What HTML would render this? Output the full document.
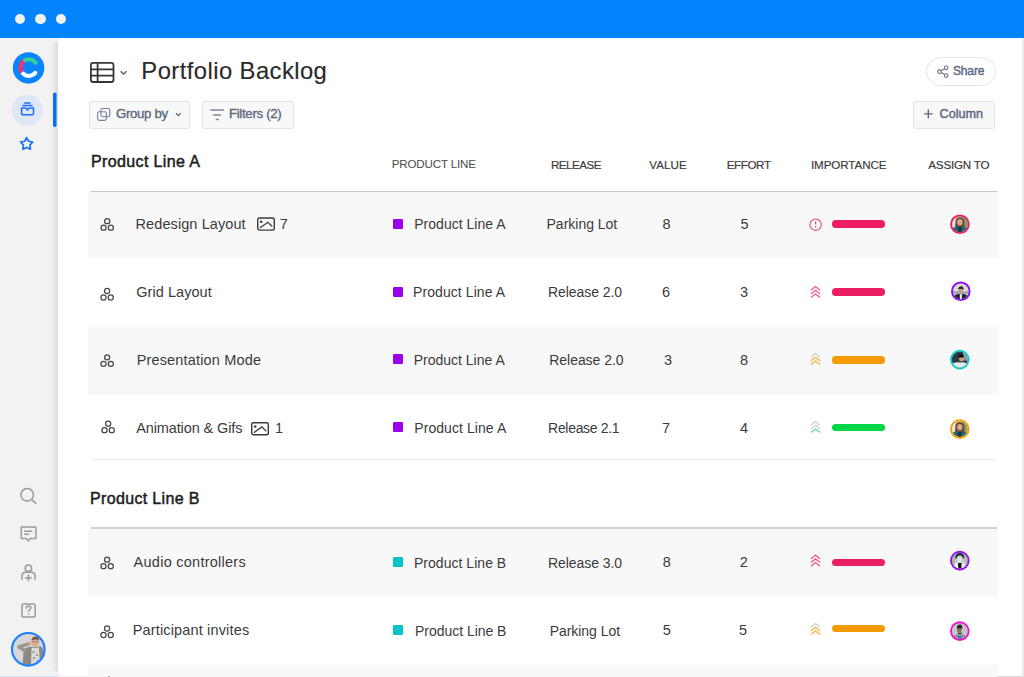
<!DOCTYPE html>
<html><head><meta charset="utf-8">
<style>
*{margin:0;padding:0;box-sizing:border-box}
html,body{width:1024px;height:677px;overflow:hidden;background:#f2f2f2;font-family:"Liberation Sans",sans-serif;color:#333}
.a{position:absolute}
.tx{position:absolute;line-height:1;white-space:nowrap}
svg{position:absolute;overflow:visible}
#bar{left:0;top:0;width:1024px;height:38px;background:#0384ff}
.dot{width:10.5px;height:10.5px;border-radius:50%;background:#f1f1f1;top:13.75px}
#panel{left:57.6px;top:38px;width:965px;height:638px;background:#fff;border-top-left-radius:5px;border-bottom-left-radius:5px;}
#redge{left:1022.4px;top:38px;width:1.6px;height:639px;background:#e9e9e9}
.btn{position:absolute;border:1px solid #e3e3e3;background:#f8f8f8;border-radius:3px}
.rowg{position:absolute;left:88px;width:909.5px;background:#f8f8f8}
.sq{position:absolute;left:392.7px;width:10.4px;height:10.2px;border-radius:1.2px}
.bar{position:absolute;left:832px;width:52.5px;height:7.7px;border-radius:3.85px}
.av{position:absolute;width:19.5px;height:19.5px;border-radius:50%;border:2px solid #e91e63}
</style></head><body>
<div id="bar" class="a"></div>
<div class="a dot" style="left:14.8px"></div>
<div class="a dot" style="left:35px"></div>
<div class="a dot" style="left:55.6px"></div>
<div class="a" style="left:50px;top:42px;width:8px;height:629px;background:linear-gradient(to right,rgba(0,0,0,0) 0,rgba(0,0,0,.02) 35%,rgba(0,0,0,.06) 70%,rgba(0,0,0,.1) 100%)"></div>
<div id="panel" class="a"></div>
<div id="redge" class="a"></div>

<!-- sidebar -->
<svg style="left:0;top:0" width="60" height="677" viewBox="0 0 60 677">
  <circle cx="28.55" cy="67.95" r="15.75" fill="#0a84ff"/>
  <g fill="none" stroke-width="4" stroke-linecap="butt">
    <path d="M24.33,60.64 A8.3,8.3 0 0 0 22.09,72.42" stroke="#ff2d6d"/>
    <path d="M22.09,72.42 A8.3,8.3 0 0 0 35.3,72.82" stroke="#ffffff"/>
    <path d="M23.74,61.06 A8.3,8.3 0 0 1 35.52,62.66" stroke="#34d28f"/>
  </g>
  <circle cx="35.52" cy="62.66" r="2" fill="#34d28f"/>
  <circle cx="35.3" cy="72.82" r="2" fill="#ffffff"/>
  <circle cx="27.3" cy="110" r="15.5" fill="#dfe7f5"/>
  <rect x="53" y="92.6" width="3.5" height="34.4" rx="1.7" fill="#0a6cff"/>
  <g fill="none" stroke="#1a6dff" stroke-width="1.5" stroke-linecap="round" stroke-linejoin="round">
    <path d="M24.6,102.9 H30"/>
    <path d="M23,105.4 H32"/>
    <path d="M21.6,108 H25.8 L27.5,110 L29.2,108 H33.5 V113.6 Q33.5,114.8 32.3,114.8 H22.8 Q21.6,114.8 21.6,113.6 Z"/>
    <path d="M26.65,137.60 L28.65,141.25 L32.74,142.02 L29.88,145.05 L30.41,149.18 L26.65,147.40 L22.89,149.18 L23.42,145.05 L20.56,142.02 L24.65,141.25 Z" stroke-width="1.7"/>
  </g>
  <g fill="none" stroke="#9a9a9a" stroke-width="1.5" stroke-linecap="round" stroke-linejoin="round">
    <circle cx="27.2" cy="494.8" r="6.3"/>
    <path d="M31.9,499.5 L35.8,503.4"/>
    <path d="M22,526.9 H35.4 Q36,526.9 36,527.5 V538 Q36,538.6 35.4,538.6 H30.2 L28.4,540.9 L26.6,538.6 H22 Q21.3,538.6 21.3,538 V527.5 Q21.3,526.9 22,526.9 Z"/>
    <path d="M24.6,531.2 H31.8 M24.6,534.3 H28.6"/>
    <circle cx="28.4" cy="568.3" r="3.2"/>
    <path d="M22,579 V576.2 Q22,572.3 25.6,572.3 H31.2 Q35,572.3 35,576.2 V579"/>
    <path d="M28.4,574.9 V580.8 M25.5,577.9 H31.3"/>
    <rect x="22" y="603.9" width="13.2" height="13.2" rx="2"/>
    <path d="M26.3,608.3 Q26.3,606 28.6,606 Q30.9,606 30.9,608.1 Q30.9,609.6 28.6,610.6 V611.6"/>
  </g>
  <circle cx="28.6" cy="614.1" r="0.9" fill="#9a9a9a"/>
  <defs>
    <clipPath id="avc"><circle cx="28.3" cy="649.3" r="15.6"/></clipPath>
    <filter id="bl2" x="-20%" y="-20%" width="140%" height="140%"><feGaussianBlur stdDeviation="0.45"/></filter>
  </defs>
  <g clip-path="url(#avc)">
    <g filter="url(#bl2)">
    <rect x="10" y="631" width="37" height="37" fill="#d7d7d7"/>
    <path d="M22.5,667 L23.5,652 Q24.5,647.5 29,647 L41,646.5 Q45,648 45,667 Z" fill="#8d8a84"/>
    <path d="M31.5,648 L39,647.5 L40,667 L31,667 Z" fill="#dadada"/>
    <path d="M32.5,651 h2 v2 h-2 z M36,654 h2 v2 h-2 z M33,657 h2 v2 h-2 z M36.5,660 h2 v2 h-2 z M33.5,663 h2 v2 h-2 z" fill="#9a9a9a"/>
    <path d="M24.5,650.5 L18.8,646.8 L28.8,643.8" fill="none" stroke="#9b978f" stroke-width="3.4" stroke-linecap="round" stroke-linejoin="round"/>
    <circle cx="29.6" cy="643.4" r="1.9" fill="#d4a487"/>
    <ellipse cx="35.3" cy="642.3" rx="3.7" ry="4.3" fill="#d8ad93"/>
    <path d="M31.4,640.6 Q31.5,636.6 35.6,636.4 Q39.4,636.6 39.2,640.4 Q36.5,638.6 31.4,640.6 Z" fill="#7d5a43"/>
    <path d="M32.2,641.6 H38.6" stroke="#7a7070" stroke-width="0.6"/>
    </g>
  </g>
  <circle cx="28.3" cy="649.3" r="16.3" fill="none" stroke="#1a80ff" stroke-width="2.1"/>
  <rect x="0" y="676" width="57" height="1" fill="#cfe0f7"/>
</svg>

<!-- header -->
<svg style="left:0;top:0" width="1024" height="140" viewBox="0 0 1024 140">
  <g fill="none" stroke="#363636" stroke-width="1.8">
    <rect x="90.9" y="62.9" width="22.6" height="19.1" rx="2.3"/>
    <path d="M97.6,63 V82 M91,69.3 H113.5 M91,75.7 H113.5"/>
  </g>
  <path d="M120.6,71.2 L123.6,74.2 L126.6,71.2" fill="none" stroke="#555" stroke-width="1.3"/>
</svg>
<div class="btn" style="left:89px;top:101px;width:101px;height:28px"></div>
<div class="btn" style="left:202px;top:101px;width:92px;height:28px"></div>
<div class="btn" style="left:926px;top:57px;width:70px;height:29px;border-radius:15px;background:#fff"></div>
<div class="btn" style="left:913px;top:101px;width:82px;height:28px"></div>
<svg style="left:0;top:0" width="1024" height="140" viewBox="0 0 1024 140">
  <g fill="none" stroke="#76829a" stroke-width="1.1">
    <rect x="100.9" y="108.5" width="8.8" height="8.3" rx="1.8"/>
    <rect x="97.6" y="111.7" width="8.8" height="8.7" rx="1.8"/>
  </g>
  <path d="M176,113.2 L178.3,115.6 L180.6,113.2" fill="none" stroke="#5a677f" stroke-width="1.3"/>
  <g fill="none" stroke="#7d879b" stroke-width="1.5" stroke-linecap="round">
    <path d="M210.8,110.1 H223.3 M213.6,114.9 H220.6 M216.4,119.6 H218.2"/>
  </g>
  <g fill="none" stroke="#68748c" stroke-width="1.1">
    <circle cx="946.2" cy="67.8" r="1.8"/>
    <circle cx="939.5" cy="71.7" r="1.8"/>
    <circle cx="946.2" cy="75.6" r="1.8"/>
    <path d="M944.6,68.8 L941.1,70.8 M941.1,72.6 L944.6,74.6"/>
  </g>
  <path d="M928.3,109.5 V118.2 M924,113.85 H932.6" fill="none" stroke="#5a677f" stroke-width="1.4"/>
</svg>

<!-- table -->
<div class="rowg" style="top:192px;height:66px"></div>
<div class="rowg" style="top:326.5px;height:68.5px"></div>
<div class="rowg" style="top:528.8px;height:68px"></div>
<div class="rowg" style="top:664.6px;height:13px"></div>
<div class="a" style="left:91px;top:190.8px;width:906px;height:1.4px;background:#c9c9c9"></div>
<div class="a" style="left:91px;top:459px;width:904px;height:1px;background:#ebebeb"></div>
<div class="a" style="left:91px;top:527px;width:906px;height:1.8px;background:#d0d0d0"></div>
<div class="a" style="left:997px;top:676px;width:25px;height:1px;background:#dcdcdc"></div>

<svg style="left:0;top:0" width="1024" height="677" viewBox="0 0 1024 677">
  <defs>
    <g id="tri" fill="none" stroke="#474747" stroke-width="1.25">
      <circle cx="0" cy="-3.25" r="2.55"/>
      <circle cx="-3.65" cy="3.25" r="2.55"/>
      <circle cx="3.65" cy="3.25" r="2.55"/>
    </g>
    <g id="img" fill="none" stroke="#3a3a3a" stroke-width="1.4">
      <rect x="0.7" y="0.7" width="16.6" height="12.1" rx="1.8"/>
      <path d="M2.8,10.7 L10.8,4.9 L15.3,9.2" stroke-width="1.2"/>
      <circle cx="4.2" cy="4.5" r="1.3" fill="#3a3a3a" stroke="none"/>
    </g>
  </defs>
  <use href="#tri" x="107.2" y="224.4"/>
  <use href="#tri" x="107.1" y="294.3"/>
  <use href="#tri" x="107.15" y="360.6"/>
  <use href="#tri" x="108.15" y="426.9"/>
  <use href="#tri" x="107.1" y="562.9"/>
  <use href="#tri" x="107.1" y="631.8"/>
  <use href="#img" x="257" y="217.3"/>
  <use href="#img" x="251" y="422"/>
  <!-- importance icons -->
  <g fill="none" stroke="#e9457a" stroke-width="1.1">
    <circle cx="815.6" cy="224.7" r="5.7"/>
  </g>
  <path d="M815.6,221.5 V224.5 M815.6,226 V227.6" stroke="#e9457a" stroke-width="1.2"/>
  <g fill="none" stroke-width="1.3" stroke-linecap="butt" stroke-linejoin="miter">
    <path d="M810.9,290.20 L815.5,286.60 L820.1,290.20" stroke="#ee5a8a"/>
    <path d="M810.9,293.90 L815.5,290.30 L820.1,293.90" stroke="#ee5a8a"/>
    <path d="M810.9,297.60 L815.5,294.00 L820.1,297.60" stroke="#ee5a8a"/>
    <path d="M810.9,357.20 L815.5,353.60 L820.1,357.20" stroke="#cfcfcf"/>
    <path d="M810.9,360.90 L815.5,357.30 L820.1,360.90" stroke="#f7b23a"/>
    <path d="M810.9,364.60 L815.5,361.00 L820.1,364.60" stroke="#f7b23a"/>
    <path d="M810.9,425.20 L815.5,421.60 L820.1,425.20" stroke="#cfcfcf"/>
    <path d="M810.9,428.90 L815.5,425.30 L820.1,428.90" stroke="#cfcfcf"/>
    <path d="M810.9,432.60 L815.5,429.00 L820.1,432.60" stroke="#5de08a"/>
    <path d="M810.9,558.80 L815.5,555.20 L820.1,558.80" stroke="#ee5a8a"/>
    <path d="M810.9,562.50 L815.5,558.90 L820.1,562.50" stroke="#ee5a8a"/>
    <path d="M810.9,566.20 L815.5,562.60 L820.1,566.20" stroke="#ee5a8a"/>
    <path d="M810.9,627.20 L815.5,623.60 L820.1,627.20" stroke="#cfcfcf"/>
    <path d="M810.9,630.90 L815.5,627.30 L820.1,630.90" stroke="#f7b23a"/>
    <path d="M810.9,634.60 L815.5,631.00 L820.1,634.60" stroke="#f7b23a"/>
  </g>
</svg>
<div class="sq" style="top:218.6px;background:#9b00ee"></div>
<div class="sq" style="top:286.7px;background:#9b00ee"></div>
<div class="sq" style="top:353.8px;background:#9b00ee"></div>
<div class="sq" style="top:421.8px;background:#9b00ee"></div>
<div class="sq" style="top:556.7px;background:#05c5c8"></div>
<div class="sq" style="top:624.7px;background:#05c5c8"></div>
<div class="bar" style="top:220.4px;background:#e91e63"></div>
<div class="bar" style="top:288.4px;background:#e91e63"></div>
<div class="bar" style="top:356.4px;background:#f59b00"></div>
<div class="bar" style="top:423.7px;background:#00d647"></div>
<div class="bar" style="top:558.6px;background:#e91e63"></div>
<div class="bar" style="top:624.6px;background:#f59b00"></div>
<svg style="left:0;top:0" width="1024" height="677" viewBox="0 0 1024 677">
  <defs>
    <clipPath id="ac"><circle cx="0" cy="0" r="8"/></clipPath>
    <filter id="bl" x="-20%" y="-20%" width="140%" height="140%"><feGaussianBlur stdDeviation="0.35"/></filter>
    <g id="woman">
      <g clip-path="url(#ac)" filter="url(#bl)">
        <rect x="-9" y="-9" width="18" height="18" fill="#c9d2c4"/>
        <rect x="2" y="-9" width="8" height="18" fill="#7fa36a"/>
        <rect x="-9" y="-9" width="5" height="18" fill="#e4e4e4"/>
        <path d="M-4.5,-1 Q-5,-7 0,-7 Q5,-7 4.5,-1 L5,6 L-5,6 Z" fill="#6e4a36"/>
        <ellipse cx="0" cy="-2" rx="2.6" ry="3.2" fill="#d7a88e"/>
        <path d="M-9,9 L-8,4 Q-4,1.5 0,3 Q4,1.5 7,4 L9,9 Z" fill="#1f6a78"/>
        <path d="M-2,3 L2,3 L1.5,9 L-1.5,9 Z" fill="#233238"/>
      </g>
    </g>
  </defs>
  <g transform="translate(959.9,224.3)">
    <use href="#woman"/>
    <circle r="8.85" fill="none" stroke="#e91e63" stroke-width="1.9"/>
  </g>
  <g transform="translate(959.8,429.1)">
    <use href="#woman"/>
    <circle r="8.85" fill="none" stroke="#f5a000" stroke-width="1.9"/>
  </g>
  <g transform="translate(960.8,291.3)">
    <g clip-path="url(#ac)" filter="url(#bl)">
      <rect x="-9" y="-9" width="18" height="18" fill="#dadada"/>
      <rect x="-9" y="0" width="18" height="2.5" fill="#9aa6b4"/>
      <ellipse cx="0" cy="-0.5" rx="2.3" ry="3" fill="#c89a80"/>
      <path d="M-2.6,-2 Q-2.5,-5 0.5,-5 Q3,-5 2.8,-1.5 Q1,-3.5 -2.6,-2 Z" fill="#262626"/>
      <path d="M-7,9 L-6,4 Q-3,2 0,3 Q3,2 6,4 L7,9 Z" fill="#1c2630"/>
      <path d="M-1,3 L1.2,3 L1,9 L-1,9 Z" fill="#eeeeee"/>
    </g>
    <circle r="8.85" fill="none" stroke="#9010e8" stroke-width="1.9"/>
  </g>
  <g transform="translate(959.8,359.6)">
    <g clip-path="url(#ac)" filter="url(#bl)">
      <rect x="-9" y="-9" width="18" height="18" fill="#2b3a44"/>
      <rect x="3" y="-9" width="6" height="10" fill="#8d96a0"/>
      <ellipse cx="1.5" cy="-1" rx="2.3" ry="3" fill="#c89a80"/>
      <path d="M-2,-2 Q-1,-6 2,-5.5 Q4.5,-5 3.8,-2 Z" fill="#111"/>
      <path d="M-8,9 L-7,4 Q-3,2 1,3 Q4,2 7,4 L8,9 Z" fill="#e6e6e6"/>
    </g>
    <circle r="8.85" fill="none" stroke="#14c8c8" stroke-width="1.9"/>
  </g>
  <g transform="translate(959.8,560.6)">
    <g clip-path="url(#ac)" filter="url(#bl)">
      <rect x="-9" y="-9" width="18" height="18" fill="#c9c9c9"/>
      <rect x="-9" y="-9" width="4" height="18" fill="#a5b79a"/>
      <rect x="5" y="-9" width="4" height="18" fill="#b2c2a6"/>
      <path d="M-4.5,-2 Q-5,-7.5 0,-7.5 Q5,-7.5 4.5,-2 L3,-2 Q3,-5 0,-5 Q-3,-5 -3,-2 Z" fill="#22303a"/>
      <ellipse cx="0" cy="-1" rx="2.4" ry="3.1" fill="#e2e2e2"/>
      <path d="M-6,9 L-5,3 Q-3,1.5 -1.5,3 L1.5,3 Q3,1.5 5,3 L6,9 Z" fill="#f0f0f0"/>
      <path d="M-1.8,2.5 L1.8,2.5 L1.5,9 L-1.5,9 Z" fill="#151515"/>
    </g>
    <circle r="8.85" fill="none" stroke="#9010e8" stroke-width="1.9"/>
  </g>
  <g transform="translate(959.8,631.1)">
    <g clip-path="url(#ac)" filter="url(#bl)">
      <rect x="-9" y="-9" width="18" height="18" fill="#c4c7c8"/>
      <ellipse cx="-0.5" cy="-1.5" rx="2.4" ry="3" fill="#8c7466"/>
      <path d="M-3,-2.5 Q-3,-6.5 0,-6.5 Q3,-6.5 2.5,-2.5 Z" fill="#2a2a2a"/>
      <path d="M-2,1 Q0,3 2,1 L1.5,3 L-1.5,3 Z" fill="#222"/>
      <path d="M-7,9 L-6,5 Q-3,2.5 0,3.5 Q3,2.5 6,5 L7,9 Z" fill="#8b9196"/>
      <path d="M-1,4 L1,4 L3,9 L-3,9 Z" fill="#5a7f95"/>
    </g>
    <circle r="8.85" fill="none" stroke="#f010d0" stroke-width="1.9"/>
  </g>
</svg>

<div class="a" style="left:107.6px;top:675.8px;width:2.6px;height:1.2px;background:#8790a3;border-radius:1px 1px 0 0"></div>
<div id="title" class="tx" style="left:141.37px;top:58.95px;font-size:23.8px;font-weight:normal;color:#2a2a2a;letter-spacing:0.433px;-webkit-text-stroke:0.15px #2a2a2a">Portfolio Backlog</div>
<div id="grp" class="tx" style="left:116.00px;top:106.82px;font-size:13.2px;font-weight:normal;color:#5b6880;letter-spacing:-0.309px;-webkit-text-stroke:0.35px #5b6880">Group by</div>
<div id="flt" class="tx" style="left:228.88px;top:106.82px;font-size:13.2px;font-weight:normal;color:#5b6880;letter-spacing:-0.279px;-webkit-text-stroke:0.35px #5b6880">Filters (2)</div>
<div id="shr" class="tx" style="left:952.88px;top:65.04px;font-size:12px;font-weight:normal;color:#5b6880;letter-spacing:-0.113px;-webkit-text-stroke:0.4px #5b6880">Share</div>
<div id="col" class="tx" style="left:939.61px;top:107.53px;font-size:12.6px;font-weight:normal;color:#5b6880;letter-spacing:0.018px;-webkit-text-stroke:0.45px #5b6880">Column</div>
<div id="plA" class="tx" style="left:91.05px;top:154.45px;font-size:16px;font-weight:normal;color:#1e1e1e;letter-spacing:0.367px;-webkit-text-stroke:0.5px #1e1e1e">Product Line A</div>
<div id="plB" class="tx" style="left:90.10px;top:490.65px;font-size:16px;font-weight:normal;color:#1e1e1e;letter-spacing:0.332px;-webkit-text-stroke:0.5px #1e1e1e">Product Line B</div>
<div id="h1" class="tx" style="left:391.77px;top:157.98px;font-size:11.6px;font-weight:normal;color:#4a4a4a;letter-spacing:-0.180px">PRODUCT LINE</div>
<div id="h2" class="tx" style="left:550.88px;top:159.48px;font-size:11.6px;font-weight:normal;color:#3b3b3b;letter-spacing:-0.480px;-webkit-text-stroke:0.18px #3b3b3b">RELEASE</div>
<div id="h3" class="tx" style="left:649.22px;top:159.48px;font-size:11.6px;font-weight:normal;color:#3b3b3b;letter-spacing:0.113px;-webkit-text-stroke:0.18px #3b3b3b">VALUE</div>
<div id="h4" class="tx" style="left:726.71px;top:159.48px;font-size:11.6px;font-weight:normal;color:#3b3b3b;letter-spacing:-0.378px;-webkit-text-stroke:0.18px #3b3b3b">EFFORT</div>
<div id="h5" class="tx" style="left:810.88px;top:159.48px;font-size:11.6px;font-weight:normal;color:#3b3b3b;letter-spacing:-0.060px;-webkit-text-stroke:0.18px #3b3b3b">IMPORTANCE</div>
<div id="h6" class="tx" style="left:928.34px;top:159.48px;font-size:11.6px;font-weight:normal;color:#3b3b3b;letter-spacing:-0.202px;-webkit-text-stroke:0.18px #3b3b3b">ASSIGN TO</div>
<div id="r0n" class="tx" style="left:135.54px;top:216.52px;font-size:14.5px;font-weight:normal;color:#3b3b3b;letter-spacing:0.090px">Redesign Layout</div>
<div id="r0c" class="tx" style="left:279.83px;top:216.52px;font-size:14.5px;font-weight:normal;color:#3b3b3b;letter-spacing:0.000px">7</div>
<div id="r0p" class="tx" style="left:414.27px;top:216.95px;font-size:14px;font-weight:normal;color:#3b3b3b;letter-spacing:0.014px">Product Line A</div>
<div id="r0r" class="tx" style="left:546.54px;top:216.95px;font-size:14px;font-weight:normal;color:#3b3b3b;letter-spacing:-0.009px">Parking Lot</div>
<div id="r0v" class="tx" style="left:662.44px;top:216.52px;font-size:14.5px;font-weight:normal;color:#3b3b3b;letter-spacing:0.000px">8</div>
<div id="r0e" class="tx" style="left:740.44px;top:216.52px;font-size:14.5px;font-weight:normal;color:#3b3b3b;letter-spacing:0.000px">5</div>
<div id="r1n" class="tx" style="left:136.22px;top:284.72px;font-size:14.5px;font-weight:normal;color:#3b3b3b;letter-spacing:0.054px">Grid Layout</div>
<div id="r1p" class="tx" style="left:413.10px;top:285.15px;font-size:14px;font-weight:normal;color:#3b3b3b;letter-spacing:0.069px">Product Line A</div>
<div id="r1r" class="tx" style="left:548.08px;top:285.15px;font-size:14px;font-weight:normal;color:#3b3b3b;letter-spacing:-0.076px">Release 2.0</div>
<div id="r1v" class="tx" style="left:662.00px;top:284.72px;font-size:14.5px;font-weight:normal;color:#3b3b3b;letter-spacing:0.000px">6</div>
<div id="r1e" class="tx" style="left:740.00px;top:284.72px;font-size:14.5px;font-weight:normal;color:#3b3b3b;letter-spacing:0.000px">3</div>
<div id="r2n" class="tx" style="left:136.66px;top:352.62px;font-size:14.5px;font-weight:normal;color:#3b3b3b;letter-spacing:0.163px">Presentation Mode</div>
<div id="r2p" class="tx" style="left:413.66px;top:353.05px;font-size:14px;font-weight:normal;color:#3b3b3b;letter-spacing:0.000px">Product Line A</div>
<div id="r2r" class="tx" style="left:549.27px;top:353.05px;font-size:14px;font-weight:normal;color:#3b3b3b;letter-spacing:-0.045px">Release 2.0</div>
<div id="r2v" class="tx" style="left:664.00px;top:352.62px;font-size:14.5px;font-weight:normal;color:#3b3b3b;letter-spacing:0.000px">3</div>
<div id="r2e" class="tx" style="left:740.00px;top:352.62px;font-size:14.5px;font-weight:normal;color:#3b3b3b;letter-spacing:0.000px">8</div>
<div id="r3n" class="tx" style="left:136.17px;top:420.92px;font-size:14.5px;font-weight:normal;color:#3b3b3b;letter-spacing:-0.114px">Animation &amp; Gifs</div>
<div id="r3c" class="tx" style="left:275.05px;top:420.92px;font-size:14.5px;font-weight:normal;color:#3b3b3b;letter-spacing:0.000px">1</div>
<div id="r3p" class="tx" style="left:414.27px;top:421.35px;font-size:14px;font-weight:normal;color:#3b3b3b;letter-spacing:0.069px">Product Line A</div>
<div id="r3r" class="tx" style="left:548.10px;top:421.35px;font-size:14px;font-weight:normal;color:#3b3b3b;letter-spacing:-0.315px">Release 2.1</div>
<div id="r3v" class="tx" style="left:662.00px;top:420.92px;font-size:14.5px;font-weight:normal;color:#3b3b3b;letter-spacing:0.000px">7</div>
<div id="r3e" class="tx" style="left:740.00px;top:420.92px;font-size:14.5px;font-weight:normal;color:#3b3b3b;letter-spacing:0.000px">4</div>
<div id="r4n" class="tx" style="left:133.61px;top:555.32px;font-size:14.5px;font-weight:normal;color:#3b3b3b;letter-spacing:0.253px">Audio controllers</div>
<div id="r4p" class="tx" style="left:413.93px;top:555.75px;font-size:14px;font-weight:normal;color:#3b3b3b;letter-spacing:0.035px">Product Line B</div>
<div id="r4r" class="tx" style="left:548.08px;top:555.75px;font-size:14px;font-weight:normal;color:#3b3b3b;letter-spacing:-0.076px">Release 3.0</div>
<div id="r4v" class="tx" style="left:662.66px;top:555.32px;font-size:14.5px;font-weight:normal;color:#3b3b3b;letter-spacing:0.000px">8</div>
<div id="r4e" class="tx" style="left:739.66px;top:555.32px;font-size:14.5px;font-weight:normal;color:#3b3b3b;letter-spacing:0.000px">2</div>
<div id="r5n" class="tx" style="left:132.71px;top:623.12px;font-size:14.5px;font-weight:normal;color:#3b3b3b;letter-spacing:0.155px">Participant invites</div>
<div id="r5p" class="tx" style="left:415.05px;top:623.55px;font-size:14px;font-weight:normal;color:#3b3b3b;letter-spacing:-0.035px">Product Line B</div>
<div id="r5r" class="tx" style="left:549.71px;top:623.55px;font-size:14px;font-weight:normal;color:#3b3b3b;letter-spacing:-0.045px">Parking Lot</div>
<div id="r5v" class="tx" style="left:662.66px;top:623.12px;font-size:14.5px;font-weight:normal;color:#3b3b3b;letter-spacing:0.000px">5</div>
<div id="r5e" class="tx" style="left:739.10px;top:623.12px;font-size:14.5px;font-weight:normal;color:#3b3b3b;letter-spacing:0.000px">5</div>
</body></html>
